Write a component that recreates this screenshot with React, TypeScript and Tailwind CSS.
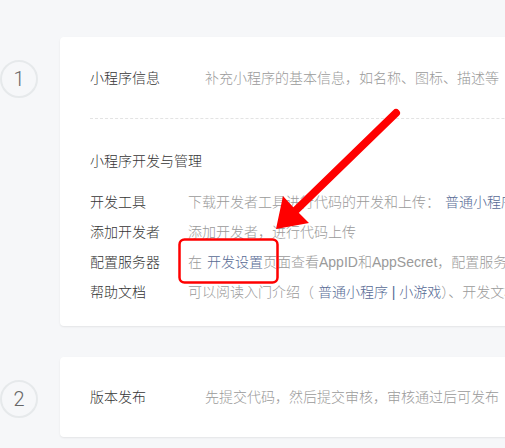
import React from 'react';

const font = { fontFamily: '"Liberation Sans", "Noto Sans CJK SC", sans-serif' };

const Link = ({ children, className = '' }: { children: React.ReactNode; className?: string }) => (
  <span className={`text-[#576b95] ${className}`}>{children}</span>
);

const devRows: { label: string; desc: React.ReactNode }[] = [
  {
    label: '开发工具',
    desc: (
      <>
        下载开发者工具进行代码的开发和上传：
        <Link className="ml-[5px]">普通小程序 | 小游戏</Link>
      </>
    ),
  },
  { label: '添加开发者', desc: '添加开发者，进行代码上传' },
  {
    label: '配置服务器',
    desc: (
      <>
        在<Link className="ml-[5px]">开发设置</Link>页面查看AppID和AppSecret，配置服务器域名
      </>
    ),
  },
  {
    label: '帮助文档',
    desc: (
      <>
        可以阅读入门介绍（ <Link>普通小程序 | 小游戏</Link>）、开发文档
      </>
    ),
  },
];

const StepCircle = ({ n }: { n: number }) => (
  <div className="mt-[23px] w-[38px] h-[38px] shrink-0 rounded-full border-2 border-[#e6e9eb] flex items-center justify-center text-[20px] font-light text-[#666] font-['Roboto',sans-serif]">
    {n}
  </div>
);

const App = () => {
  return (
    <div className="relative h-[448px] w-[505px] overflow-hidden bg-[#f6f7f9] pt-[37px] text-[14px] font-light" style={font}>
      {/* step 1 */}
      <div className="flex gap-[22px]">
        <StepCircle n={1} />
        <div className="w-[600px] shrink-0 rounded-[4px] bg-white shadow-[0_1px_2px_rgba(0,0,0,0.08)] pl-[30px] pt-[30px] pb-[19px]">
          <div className="flex leading-[22px] whitespace-nowrap">
            <div className="w-[115px] text-[#353535]">小程序信息</div>
            <div className="text-[#9a9a9a]">补充小程序的基本信息，如名称、图标、描述等</div>
          </div>
          <div className="mt-[29px] border-t border-dashed border-[#e3e3e3]" />
          <div className="mt-[31px] leading-[22px] text-[#353535]">小程序开发与管理</div>
          <div className="mt-[15px]">
            {devRows.map((row) => (
              <div key={row.label} className="flex leading-[30px] whitespace-nowrap">
                <div className="w-[98px] text-[#353535]">{row.label}</div>
                <div className="text-[#9a9a9a]">{row.desc}</div>
              </div>
            ))}
          </div>
        </div>
      </div>

      {/* step 2 */}
      <div className="mt-[31px] flex gap-[22px]">
        <StepCircle n={2} />
        <div className="w-[600px] shrink-0 rounded-[4px] bg-white shadow-[0_1px_2px_rgba(0,0,0,0.08)] pl-[30px] py-[29px]">
          <div className="flex leading-[22px] whitespace-nowrap">
            <div className="w-[115px] text-[#353535]">版本发布</div>
            <div className="text-[#9a9a9a]">先提交代码，然后提交审核，审核通过后可发布</div>
          </div>
        </div>
      </div>

      {/* annotation */}
      <svg className="absolute left-0 top-0 pointer-events-none" width="505" height="448" viewBox="0 0 505 448">
        <rect x="179.5" y="239.5" width="98" height="43" rx="5" fill="none" stroke="#f00" strokeWidth="2.5" />
        <line x1="396" y1="113" x2="292" y2="214" stroke="#f00" strokeWidth="8" strokeLinecap="round" />
        <polygon points="276,229 283,196 294,208 309,223" fill="#f00" />
      </svg>
    </div>
  );
};

export default App;
